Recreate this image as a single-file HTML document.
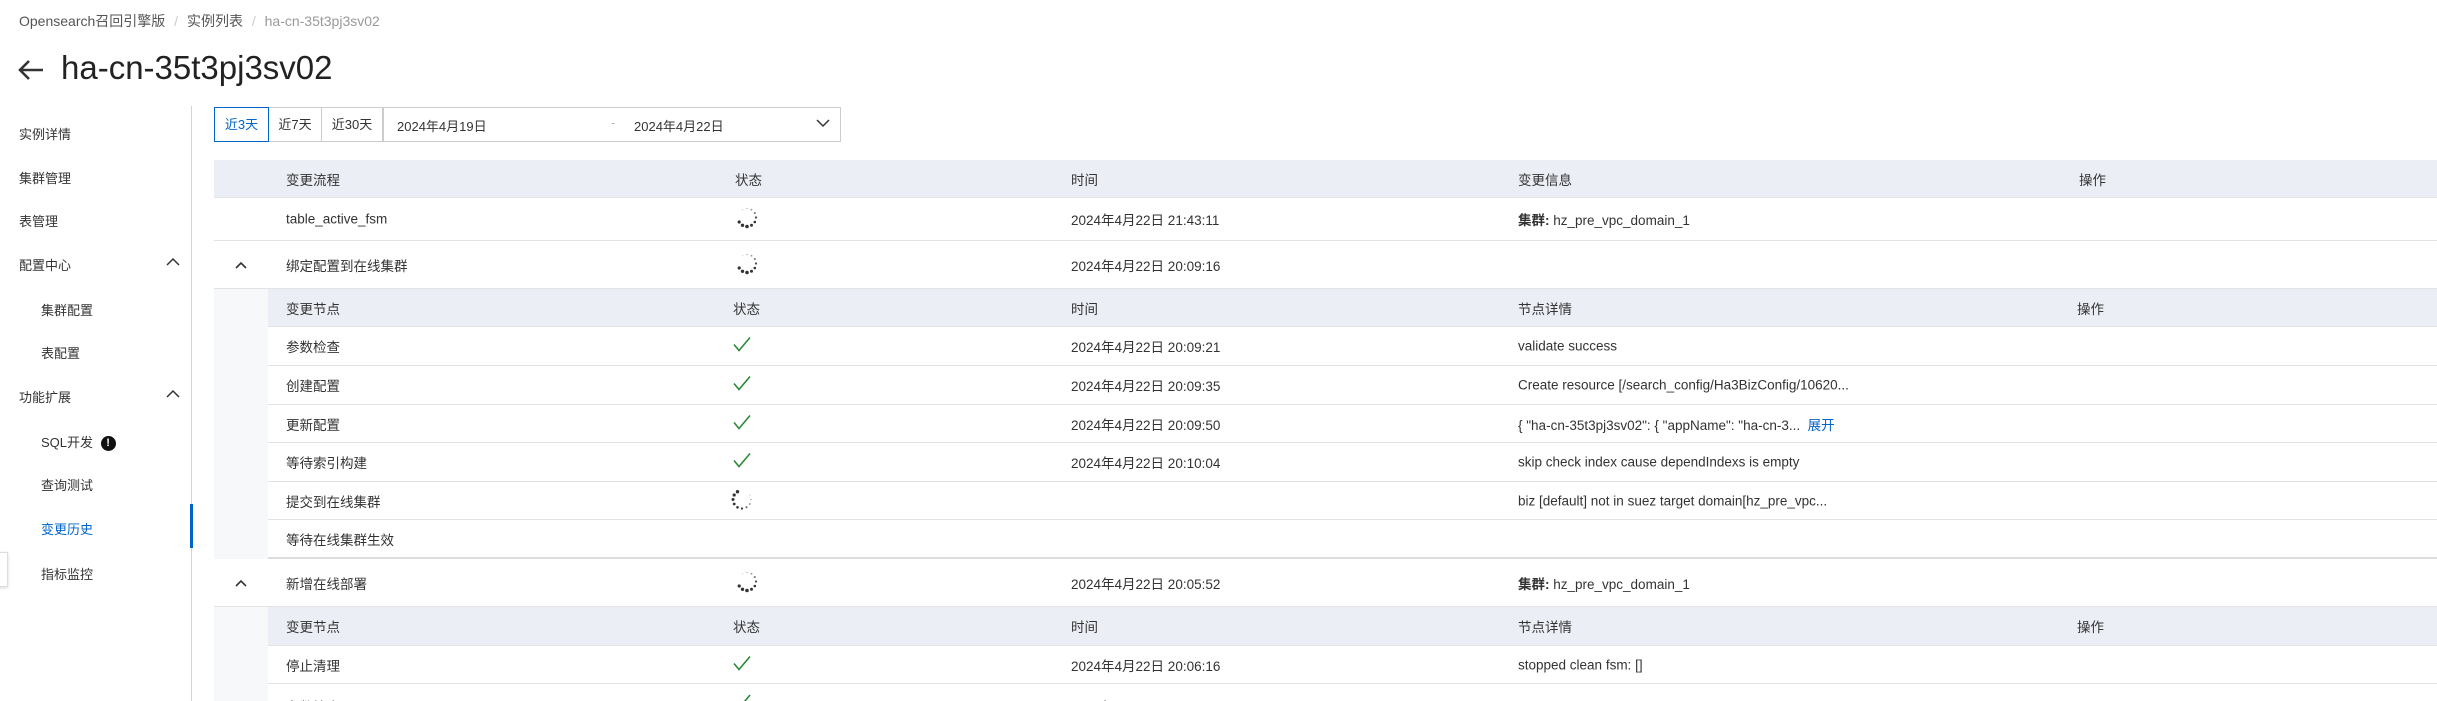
<!DOCTYPE html>
<html style="height:701px;overflow:hidden"><head><meta charset="utf-8"><style>
*{margin:0;padding:0;box-sizing:border-box}
body{width:2437px;height:701px;overflow:hidden;background:#fff;font-family:"Liberation Sans","Noto Sans CJK SC",sans-serif;font-size:13px;color:#333;position:relative}
.a{position:absolute;white-space:nowrap}
.row{position:absolute;left:214px;right:0;border-bottom:1px solid #e3e3e3}
.hd{background:#ebeef5}
.nest{left:268px}
.c{position:absolute;top:50%;transform:translateY(-50%);white-space:nowrap;font-size:13.5px}
.gray{position:absolute;left:214px;width:54px;background:#f7f8fa}
.side{position:absolute;left:19px;white-space:nowrap;color:#333}
.sub{left:41px}
</style></head><body>
<div class="a" style="left:19px;top:11px;color:#555;font-size:14px">Opensearch召回引擎版 <span style="color:#ccc;margin:0 5px">/</span> 实例列表 <span style="color:#ccc;margin:0 5px">/</span> <span style="color:#999">ha-cn-35t3pj3sv02</span></div>
<svg class="a" style="left:17px;top:58px" width="28" height="24" viewBox="0 0 28 24"><path d="M26 12H3M12 3L3 12l9 9" stroke="#333" stroke-width="2.6" fill="none"/></svg>
<div class="a" style="left:61px;top:49px;font-size:33px;color:#222">ha-cn-35t3pj3sv02</div>

<div class="side" style="top:124px">实例详情</div>
<div class="side" style="top:168px">集群管理</div>
<div class="side" style="top:211px">表管理</div>
<div class="side" style="top:255px">配置中心</div>
<div class="side sub" style="top:300px">集群配置</div>
<div class="side sub" style="top:343px">表配置</div>
<div class="side" style="top:387px">功能扩展</div>
<div class="side sub" style="top:432px">SQL开发 <span style="display:inline-block;width:15px;height:15px;border-radius:50%;background:#111;color:#fff;font-size:11px;font-weight:bold;text-align:center;line-height:15px;vertical-align:1px;margin-left:4px">!</span></div>
<div class="side sub" style="top:475px">查询测试</div>
<div class="side sub" style="top:519px;color:#0064c8">变更历史</div>
<div class="side sub" style="top:564px">指标监控</div>
<svg class="a" style="left:166px;top:257px" width="14" height="10"><path d="M1 8l6-6 6 6" stroke="#333" stroke-width="1.5" fill="none"/></svg>
<svg class="a" style="left:166px;top:389px" width="14" height="10"><path d="M1 8l6-6 6 6" stroke="#333" stroke-width="1.5" fill="none"/></svg>
<div class="a" style="left:191px;top:106px;width:1px;height:595px;background:#d0d3d9"></div>
<div class="a" style="left:190px;top:504px;width:3px;height:44px;background:#0064c8"></div>
<div class="a" style="left:-4px;top:552px;width:12px;height:35px;border:1px solid #ddd;background:#fff;box-shadow:0 1px 3px rgba(0,0,0,.15)"></div>

<div class="a" style="left:214px;top:107px;width:55px;height:35px;border:1px solid #0064c8;color:#0064c8;text-align:center;line-height:33px;background:#fff;z-index:2">近3天</div>
<div class="a" style="left:268px;top:107px;width:54px;height:35px;border:1px solid #ccc;text-align:center;line-height:33px">近7天</div>
<div class="a" style="left:321px;top:107px;width:62px;height:35px;border:1px solid #ccc;text-align:center;line-height:33px">近30天</div>
<div class="a" style="left:383px;top:107px;width:458px;height:35px;border:1px solid #ccc"></div>
<div class="a" style="left:397px;top:116px">2024年4月19日</div>
<div class="a" style="left:611px;top:115px;color:#bbb">-</div>
<div class="a" style="left:634px;top:116px">2024年4月22日</div>
<svg class="a" style="left:816px;top:118px" width="14" height="10"><path d="M1 2l6 6 6-6" stroke="#333" stroke-width="1.5" fill="none"/></svg>

<div class="row hd" style="top:160px;height:38px">
<div class="c" style="left:72px">变更流程</div><div class="c" style="left:521px">状态</div><div class="c" style="left:857px">时间</div><div class="c" style="left:1304px">变更信息</div><div class="c" style="left:1865px">操作</div></div>
<div class="row" style="top:198px;height:43px">
<div class="c" style="left:72px">table_active_fsm</div><div class="c" style="left:521px"><svg width="24" height="24" viewBox="-12 -12 24 24"><g fill="#333"><circle cx="0" cy="9" r="1.8"/><circle cx="-4.5" cy="7.8" r="1.7"/><circle cx="-7.8" cy="4.5" r="1.6"/><circle cx="4.5" cy="7.8" r="1.5"/><circle cx="7.8" cy="4.5" r="1.3"/><circle cx="9" cy="0" r="1.1" opacity=".9"/><circle cx="7.8" cy="-4.5" r="1" opacity=".7"/><circle cx="4.5" cy="-7.8" r=".9" opacity=".5"/><circle cx="0" cy="-9" r=".8" opacity=".35"/><circle cx="-4.5" cy="-7.8" r=".7" opacity=".2"/></g></svg></div><div class="c" style="left:857px">2024年4月22日 21:43:11</div><div class="c" style="left:1304px"><b>集群:</b> hz_pre_vpc_domain_1</div></div>
<div class="row" style="top:241px;height:48px">
<svg class="c" style="left:20px" width="14" height="10"><path d="M2 8l5-5 5 5" stroke="#333" stroke-width="1.6" fill="none"/></svg>
<div class="c" style="left:72px">绑定配置到在线集群</div><div class="c" style="left:521px"><svg width="24" height="24" viewBox="-12 -12 24 24"><g fill="#333"><circle cx="0" cy="9" r="1.8"/><circle cx="-4.5" cy="7.8" r="1.7"/><circle cx="-7.8" cy="4.5" r="1.6"/><circle cx="4.5" cy="7.8" r="1.5"/><circle cx="7.8" cy="4.5" r="1.3"/><circle cx="9" cy="0" r="1.1" opacity=".9"/><circle cx="7.8" cy="-4.5" r="1" opacity=".7"/><circle cx="4.5" cy="-7.8" r=".9" opacity=".5"/><circle cx="0" cy="-9" r=".8" opacity=".35"/><circle cx="-4.5" cy="-7.8" r=".7" opacity=".2"/></g></svg></div><div class="c" style="left:857px">2024年4月22日 20:09:16</div></div>
<div class="gray" style="top:289px;height:270px"></div>
<div class="row nest hd" style="top:289px;height:38px"><div class="c" style="left:18px">变更节点</div><div class="c" style="left:465px">状态</div><div class="c" style="left:803px">时间</div><div class="c" style="left:1250px">节点详情</div><div class="c" style="left:1809px">操作</div></div>
<div class="row nest" style="top:327px;height:39px"><div class="c" style="left:18px">参数检查</div><div class="c" style="left:465px"><svg width="18" height="16"><path d="M1 8l5 6L17 1" stroke="#2c8a38" stroke-width="1.6" fill="none"/></svg></div><div class="c" style="left:803px">2024年4月22日 20:09:21</div><div class="c" style="left:1250px">validate success</div></div>
<div class="row nest" style="top:366px;height:39px"><div class="c" style="left:18px">创建配置</div><div class="c" style="left:465px"><svg width="18" height="16"><path d="M1 8l5 6L17 1" stroke="#2c8a38" stroke-width="1.6" fill="none"/></svg></div><div class="c" style="left:803px">2024年4月22日 20:09:35</div><div class="c" style="left:1250px">Create resource [/search_config/Ha3BizConfig/10620...</div></div>
<div class="row nest" style="top:405px;height:38px"><div class="c" style="left:18px">更新配置</div><div class="c" style="left:465px"><svg width="18" height="16"><path d="M1 8l5 6L17 1" stroke="#2c8a38" stroke-width="1.6" fill="none"/></svg></div><div class="c" style="left:803px">2024年4月22日 20:09:50</div><div class="c" style="left:1250px">{ "ha-cn-35t3pj3sv02": { "appName": "ha-cn-3... &nbsp;<span style="color:#0064c8">展开</span></div></div>
<div class="row nest" style="top:443px;height:39px"><div class="c" style="left:18px">等待索引构建</div><div class="c" style="left:465px"><svg width="18" height="16"><path d="M1 8l5 6L17 1" stroke="#2c8a38" stroke-width="1.6" fill="none"/></svg></div><div class="c" style="left:803px">2024年4月22日 20:10:04</div><div class="c" style="left:1250px">skip check index cause dependIndexs is empty</div></div>
<div class="row nest" style="top:482px;height:38px"><div class="c" style="left:18px">提交到在线集群</div><div class="c" style="left:462px"><svg width="24" height="24" viewBox="-12 -12 24 24"><g fill="#333"><circle cx="-9" cy="0" r="1.5"/><circle cx="-7.8" cy="-4.5" r="1.6"/><circle cx="-4.5" cy="-7.8" r="1.7"/><circle cx="-7.8" cy="4.5" r="1.4"/><circle cx="-4.5" cy="7.8" r="1.3"/><circle cx="0" cy="9" r="1.1"/><circle cx="4.5" cy="7.8" r="1" opacity=".8"/><circle cx="7.8" cy="4.5" r=".9" opacity=".6"/><circle cx="9" cy="0" r=".8" opacity=".4"/><circle cx="7.8" cy="-4.5" r=".7" opacity=".25"/></g></svg></div><div class="c" style="left:1250px">biz [default] not in suez target domain[hz_pre_vpc...</div></div>
<div class="row nest" style="top:520px;height:39px;border-bottom:2px solid #ddd"><div class="c" style="left:18px">等待在线集群生效</div></div>
<div class="row" style="top:559px;height:48px">
<svg class="c" style="left:20px" width="14" height="10"><path d="M2 8l5-5 5 5" stroke="#333" stroke-width="1.6" fill="none"/></svg>
<div class="c" style="left:72px">新增在线部署</div><div class="c" style="left:521px"><svg width="24" height="24" viewBox="-12 -12 24 24"><g fill="#333"><circle cx="0" cy="9" r="1.8"/><circle cx="-4.5" cy="7.8" r="1.7"/><circle cx="-7.8" cy="4.5" r="1.6"/><circle cx="4.5" cy="7.8" r="1.5"/><circle cx="7.8" cy="4.5" r="1.3"/><circle cx="9" cy="0" r="1.1" opacity=".9"/><circle cx="7.8" cy="-4.5" r="1" opacity=".7"/><circle cx="4.5" cy="-7.8" r=".9" opacity=".5"/><circle cx="0" cy="-9" r=".8" opacity=".35"/><circle cx="-4.5" cy="-7.8" r=".7" opacity=".2"/></g></svg></div><div class="c" style="left:857px">2024年4月22日 20:05:52</div><div class="c" style="left:1304px"><b>集群:</b> hz_pre_vpc_domain_1</div></div>
<div class="gray" style="top:607px;height:94px"></div>
<div class="row nest hd" style="top:607px;height:39px"><div class="c" style="left:18px">变更节点</div><div class="c" style="left:465px">状态</div><div class="c" style="left:803px">时间</div><div class="c" style="left:1250px">节点详情</div><div class="c" style="left:1809px">操作</div></div>
<div class="row nest" style="top:646px;height:38px"><div class="c" style="left:18px">停止清理</div><div class="c" style="left:465px"><svg width="18" height="16"><path d="M1 8l5 6L17 1" stroke="#2c8a38" stroke-width="1.6" fill="none"/></svg></div><div class="c" style="left:803px">2024年4月22日 20:06:16</div><div class="c" style="left:1250px">stopped clean fsm: []</div></div>
<div class="row nest" style="top:684px;height:17px;overflow:hidden;border-bottom:none"><div class="a" style="left:18px;top:12px;font-size:13.5px">参数检查</div><div class="a" style="left:465px;top:10px"><svg width="18" height="16"><path d="M1 8l5 6L17 1" stroke="#2c8a38" stroke-width="1.6" fill="none"/></svg></div><div class="a" style="left:803px;top:12px;font-size:13.5px">2024年4月22日 20:06:45</div></div>
</body></html>
